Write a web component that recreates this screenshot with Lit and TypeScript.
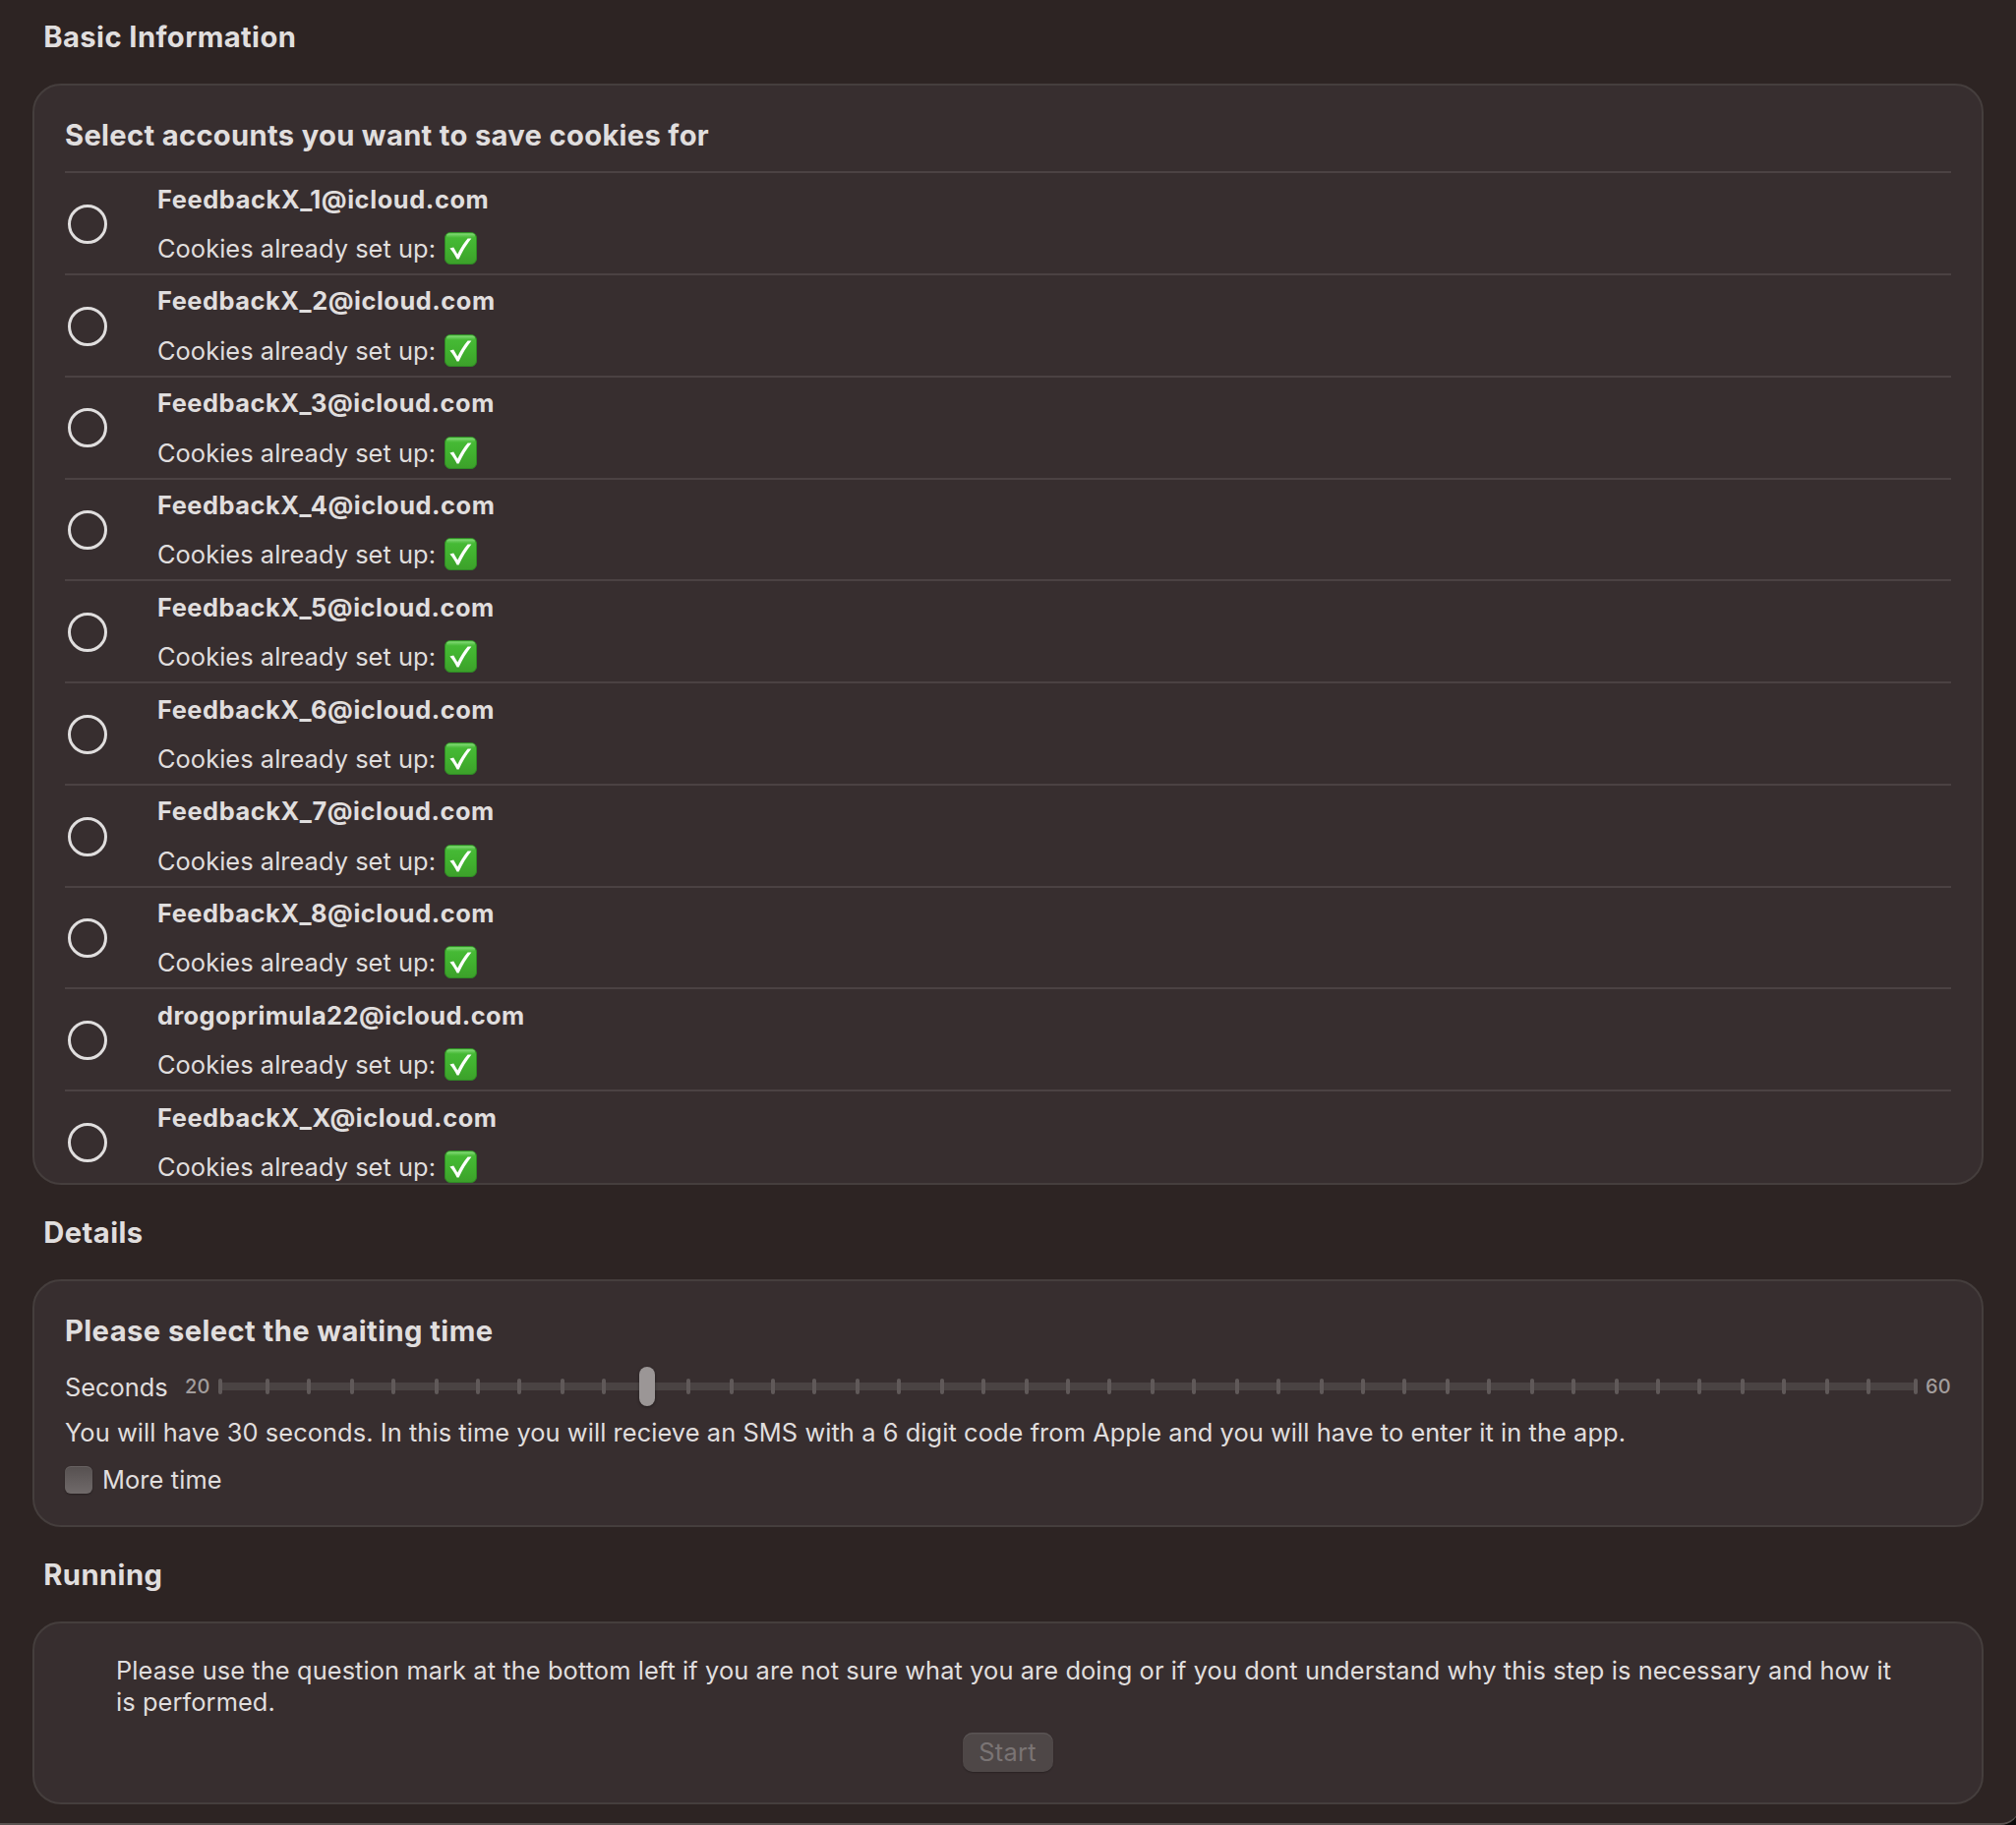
import { LitElement, html, svg, css } from "lit";
import { customElement, property, state } from "lit/decorators.js";
import { styleMap } from "lit/directives/style-map.js";

interface Account {
  email: string;
  tracking: number;
}

const ACCOUNTS: Account[] = [
  { email: "FeedbackX_1@icloud.com", tracking: 0.6 },
  { email: "FeedbackX_2@icloud.com", tracking: 0.53 },
  { email: "FeedbackX_3@icloud.com", tracking: 0.53 },
  { email: "FeedbackX_4@icloud.com", tracking: 0.53 },
  { email: "FeedbackX_5@icloud.com", tracking: 0.53 },
  { email: "FeedbackX_6@icloud.com", tracking: 0.53 },
  { email: "FeedbackX_7@icloud.com", tracking: 0.55 },
  { email: "FeedbackX_8@icloud.com", tracking: 0.53 },
  { email: "drogoprimula22@icloud.com", tracking: 0.43 },
  { email: "FeedbackX_X@icloud.com", tracking: 0.55 },
];

@customElement("check-emoji")
class CheckEmoji extends LitElement {
  static styles = css`
    :host { display: block; width: 33px; height: 33px; }
    .icon { display: block; width: 33px; height: 33px; }
  `;
  render() {
    return html`<svg class="icon" viewBox="0 0 33 33" role="img" aria-label="done">
      <defs>
        <linearGradient id="fill" x1="0" y1="0" x2="0" y2="1">
          <stop offset="0" stop-color="#48bd38" />
          <stop offset="0.5" stop-color="#41b22f" />
          <stop offset="1" stop-color="#3ca02a" />
        </linearGradient>
        <linearGradient id="gloss" x1="0" y1="0" x2="0" y2="1">
          <stop offset="0" stop-color="#8fe084" stop-opacity="0.95" />
          <stop offset="1" stop-color="#6fce62" stop-opacity="0" />
        </linearGradient>
      </defs>
      <rect x="0.5" y="0.5" width="32" height="32" rx="5.5" fill="url(#fill)" stroke="#2f8a25" />
      <rect x="2" y="1.4" width="29" height="4.6" rx="2.3" fill="url(#gloss)" />
      <path d="M5.4 16.6 L9.2 15.6 C10.6 18 11.9 20 13.3 22.4 C16.2 16.6 19.4 11.4 23.6 6.4 L27.4 6.4 C22.2 13 18 19.6 14.6 27.6 L12.6 27.6 C10.6 23.4 8.3 19.8 5.4 16.6 Z" fill="#fff" />
    </svg>`;
  }
}

@customElement("account-row")
class AccountRow extends LitElement {
  @property({ attribute: false }) account!: Account;
  static styles = css`
    :host {
      display: flex;
      align-items: flex-start;
      box-sizing: border-box;
      height: 103.782px;
      flex: none;
      border-top: 2px solid #4b4243;
    }
    .radio {
      box-sizing: border-box;
      flex: none;
      width: 40px;
      height: 40px;
      margin: 31.67px 51px 0 3px;
      border: 3px solid #e0dede;
      border-radius: 50%;
    }
    .text {
      display: flex;
      flex-direction: column;
      gap: 19.3px;
      padding-top: 10.5px;
      line-height: 31px;
      white-space: nowrap;
    }
    .name { font-weight: 700; }
    .status { display: flex; align-items: flex-start; gap: 8px; height: 31px; }
    .label { width: 284px; letter-spacing: 0.05px; }
    .mark { margin-top: -1px; }
  `;
  render() {
    return html`
      <div class="radio"></div>
      <div class="text">
        <div class="name" style=${styleMap({ letterSpacing: `${this.account.tracking}px` })}>${this.account.email}</div>
        <div class="status"><span class="label">Cookies already set up:</span><check-emoji class="mark"></check-emoji></div>
      </div>`;
  }
}

@customElement("tick-slider")
class TickSlider extends LitElement {
  @property({ type: Number }) min = 20;
  @property({ type: Number }) max = 60;
  @property({ type: Number }) value = 30;
  static styles = css`
    :host { display: block; width: 1728px; height: 40px; }
    .track { display: block; overflow: visible; }
    .bar { fill: #4a4343; }
    .tick { fill: #605959; }
    .thumb { fill: #9b9696; filter: drop-shadow(0 1px 1.5px rgba(0, 0, 0, 0.4)); }
  `;
  /* Inner ticks are evenly spaced; the outer two sit at the track's ends. */
  private center(step: number, count: number) {
    if (step === 0) return 2;
    if (step === count) return 1726;
    return 2 * Math.round((864 + (step - count / 2) * 42.86) / 2);
  }
  render() {
    const count = this.max - this.min;
    const at = this.value - this.min;
    const ticks = Array.from({ length: count + 1 }, (_, i) => i).filter((i) => i !== at);
    return html`<svg class="track" width="1728" height="40" viewBox="0 0 1728 40">
      <rect class="bar" x="2" y="16" width="1724" height="8" />
      ${ticks.map((i) => svg`<rect class="tick" x=${this.center(i, count) - 2} y="12" width="4" height="16" rx="2" />`)}
      <rect class="thumb" x=${this.center(at, count) - 8} y="0" width="16" height="40" rx="8" />
    </svg>`;
  }
}

@customElement("app-root")
class AppRoot extends LitElement {
  @state() private seconds = 30;
  static styles = css`
    :host {
      display: block;
      width: 2050px;
      height: 1856px;
      overflow: hidden;
      background: #0c0a0a;
      color: #e0dede;
      font: 400 25.4px/31px Inter, "Liberation Sans", sans-serif;
    }
    .window {
      box-sizing: border-box;
      width: 2054px;
      height: 1856px;
      padding: 20px 37px 0 33px;
      background: #2d2423;
      border-bottom: 2px solid #5a5351;
      border-radius: 0 0 20px 0;
      display: flex;
      flex-direction: column;
    }
    .section-title, .card-title {
      margin: 0;
      font-size: 29.2px;
      line-height: 35px;
      font-weight: 700;
      flex: none;
      white-space: nowrap;
    }
    .section-title { padding: 0 0 30px 11.3px; letter-spacing: 0.4px; }
    .card {
      box-sizing: border-box;
      flex: none;
      display: flex;
      flex-direction: column;
      margin-bottom: 31px;
      padding: 33px 31px 0;
      background: #372e2f;
      border: 2px solid #453e3d;
      border-radius: 29px;
      overflow: hidden;
    }
    .accounts { height: 1120px; }
    .accounts .card-title { letter-spacing: 0.3px; margin-bottom: 19.2px; }
    .details { height: 252px; }
    .details .card-title { letter-spacing: 0.4px; margin-bottom: 19px; }
    .running { height: 186px; align-items: center; padding-top: 31px; }
    .slider-row { display: flex; align-items: center; height: 40px; flex: none; }
    .seconds { width: 122px; margin-top: 1px; }
    .bound { font-size: 20px; line-height: 24px; font-weight: 500; color: #a29d9d; letter-spacing: 0.2px; }
    .low { width: 34px; }
    .high { margin-left: 8px; }
    .info { margin: 11px 0 17px; white-space: nowrap; letter-spacing: 0.075px; }
    .more { display: flex; align-items: flex-start; gap: 10px; letter-spacing: 0.1px; }
    .checkbox {
      width: 28px;
      height: 28px;
      margin-top: 2px;
      border-radius: 6px;
      background: linear-gradient(#565050, #706a6a);
      box-shadow: inset 0 1px 0 rgba(255, 255, 255, 0.1), 0 1px 2px rgba(0, 0, 0, 0.3);
    }
    .hint {
      box-sizing: border-box;
      width: 1816px;
      padding: 1px 0 0 1px;
      line-height: 32px;
      letter-spacing: 0.09px;
      margin-bottom: 15px;
    }
    .start {
      box-sizing: border-box;
      width: 92px;
      height: 40px;
      padding: 0 1px 2px 0;
      border: 0;
      border-radius: 10px;
      background: #4e4747;
      box-shadow: inset 0 1.5px 0 #5a5454, 0 1px 1.5px rgba(0, 0, 0, 0.25);
      color: #7a7474;
      font: inherit;
      letter-spacing: 0.3px;
    }
  `;
  render() {
    return html`
      <main class="window">
        <h2 class="section-title">Basic Information</h2>
        <section class="card accounts">
          <h3 class="card-title">Select accounts you want to save cookies for</h3>
          ${ACCOUNTS.map((a) => html`<account-row .account=${a}></account-row>`)}
        </section>
        <h2 class="section-title">Details</h2>
        <section class="card details">
          <h3 class="card-title">Please select the waiting time</h3>
          <div class="slider-row">
            <span class="seconds">Seconds</span>
            <span class="bound low">20</span>
            <tick-slider .value=${this.seconds}></tick-slider>
            <span class="bound high">60</span>
          </div>
          <div class="info">You will have ${this.seconds} seconds. In this time you will recieve an SMS with a 6 digit code from Apple and you will have to enter it in the app.</div>
          <div class="more"><span class="checkbox"></span><span>More time</span></div>
        </section>
        <h2 class="section-title">Running</h2>
        <section class="card running">
          <div class="hint">Please use the question mark at the bottom left if you are not sure what you are doing or if you dont understand why this step is necessary and how it is performed.</div>
          <button class="start" disabled>Start</button>
        </section>
      </main>`;
  }
}
